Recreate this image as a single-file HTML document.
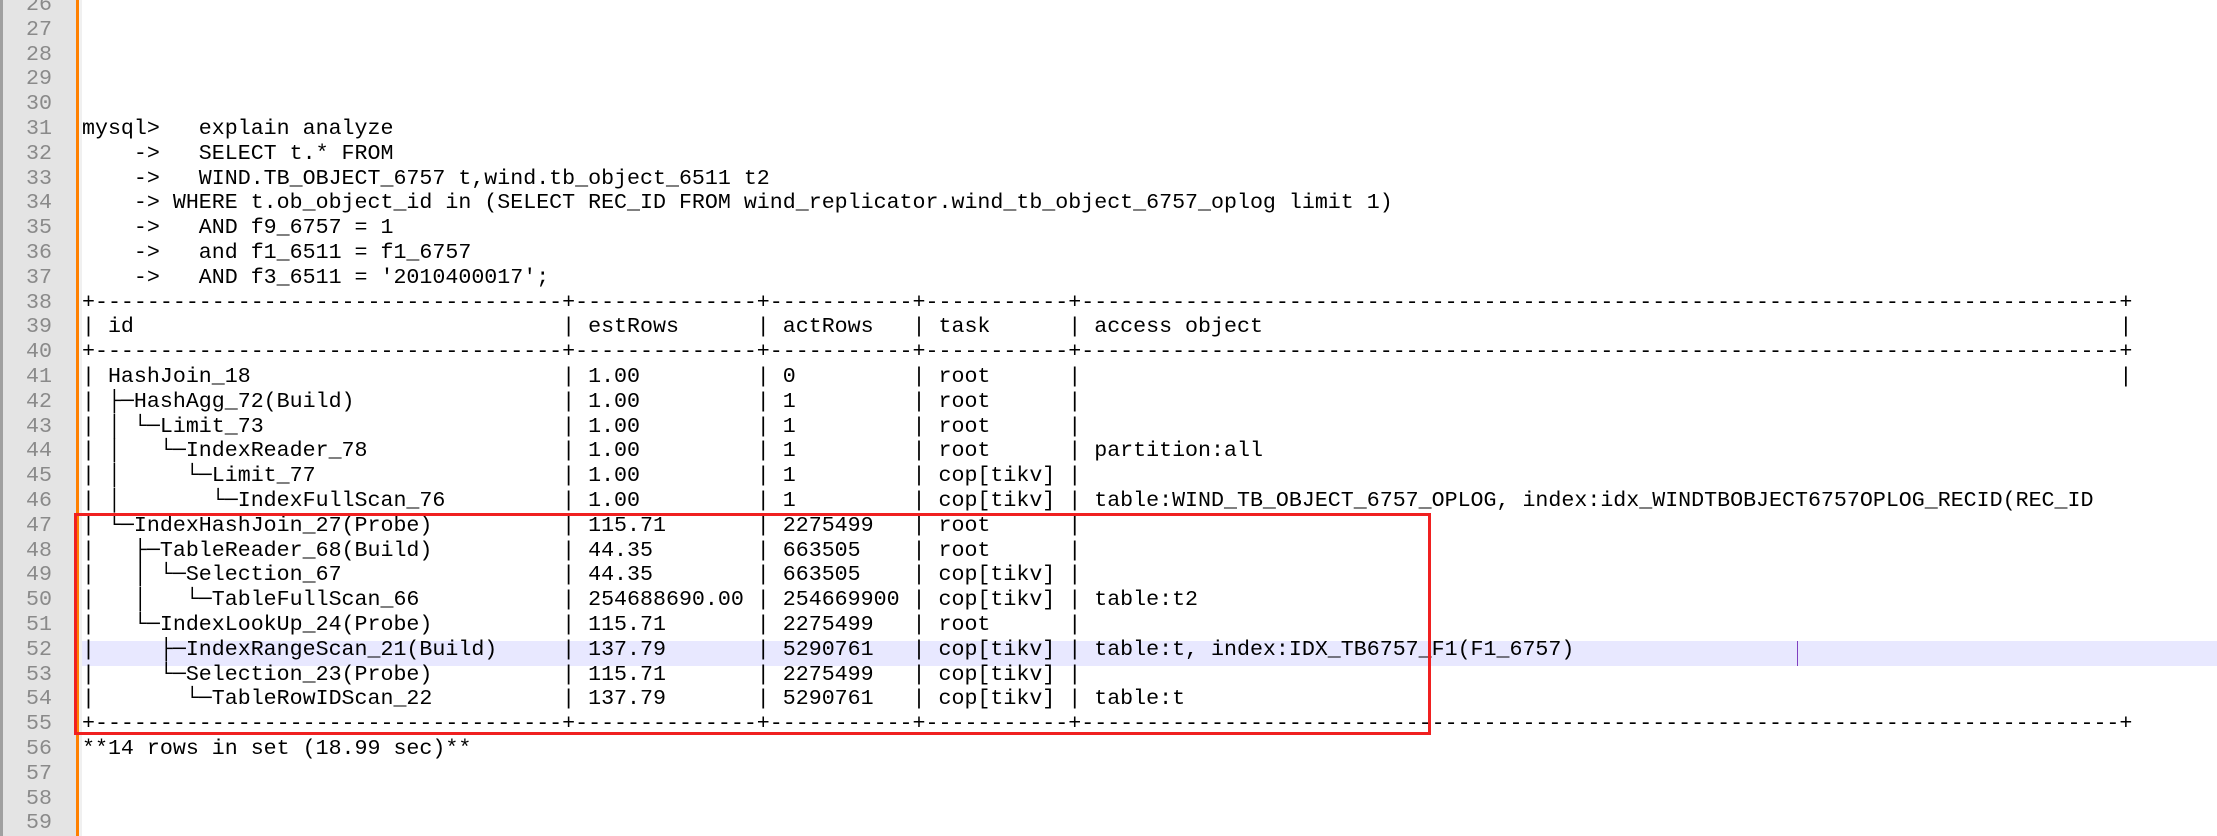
<!DOCTYPE html>
<html><head><meta charset="utf-8"><style>
html,body{margin:0;padding:0;background:#fff;width:2217px;height:836px;overflow:hidden;position:relative}
#gut{position:absolute;left:0;top:0;width:76px;height:836px;background:#e4e4e4;border-left:3px solid #a0a0a0;box-sizing:border-box}
#or{position:absolute;left:76px;top:0;width:3px;height:836px;background:#ff8000}
#st{position:absolute;left:79px;top:0;width:3px;height:836px;background:#f0f0f0}
.hl{position:absolute;left:82px;right:0;height:25px;background:#e8e8ff}
.ln{position:absolute;left:0;width:52px;text-align:right;font-family:"Liberation Mono",monospace;font-size:21.63px;color:#8a8a8a;line-height:24.8px;white-space:pre}
.tx{position:absolute;left:82px;font-family:"Liberation Mono","DejaVu Sans Mono",monospace;font-size:21.63px;color:#000;line-height:24.8px;white-space:pre}
#box{position:absolute;left:74px;top:513px;width:1357px;height:222px;border:3px solid #f02020;box-sizing:border-box}
#cur{position:absolute;left:1797px;top:641px;width:1px;height:25px;background:#8040c0}
</style></head><body>
<div id="gut"></div><div id="or"></div><div id="st"></div>
<div class="hl" style="top:641px"></div>
<div id="cur"></div>
<div class="ln" style="top:-7px">26
27
28
29
30
31
32
33
34
35
36
37
38
39
40
41
42
43
44
45
46
47
48
49
50
51
52
53
54
55
56
57
58
59</div>
<div class="tx" style="top:-7px">




mysql>   explain analyze
    ->   SELECT t.* FROM
    ->   WIND.TB_OBJECT_6757 t,wind.tb_object_6511 t2
    -> WHERE t.ob_object_id in (SELECT REC_ID FROM wind_replicator.wind_tb_object_6757_oplog limit 1)
    ->   AND f9_6757 = 1
    ->   and f1_6511 = f1_6757
    ->   AND f3_6511 = '2010400017';
+------------------------------------+--------------+-----------+-----------+--------------------------------------------------------------------------------+
| id                                 | estRows      | actRows   | task      | access object                                                                  |
+------------------------------------+--------------+-----------+-----------+--------------------------------------------------------------------------------+
| HashJoin_18                        | 1.00         | 0         | root      |                                                                                |
| ├─HashAgg_72(Build)                | 1.00         | 1         | root      |
| │ └─Limit_73                       | 1.00         | 1         | root      |
| │   └─IndexReader_78               | 1.00         | 1         | root      | partition:all
| │     └─Limit_77                   | 1.00         | 1         | cop[tikv] |
| │       └─IndexFullScan_76         | 1.00         | 1         | cop[tikv] | table:WIND_TB_OBJECT_6757_OPLOG, index:idx_WINDTBOBJECT6757OPLOG_RECID(REC_ID
| └─IndexHashJoin_27(Probe)          | 115.71       | 2275499   | root      |
|   ├─TableReader_68(Build)          | 44.35        | 663505    | root      |
|   │ └─Selection_67                 | 44.35        | 663505    | cop[tikv] |
|   │   └─TableFullScan_66           | 254688690.00 | 254669900 | cop[tikv] | table:t2
|   └─IndexLookUp_24(Probe)          | 115.71       | 2275499   | root      |
|     ├─IndexRangeScan_21(Build)     | 137.79       | 5290761   | cop[tikv] | table:t, index:IDX_TB6757_F1(F1_6757)
|     └─Selection_23(Probe)          | 115.71       | 2275499   | cop[tikv] |
|       └─TableRowIDScan_22          | 137.79       | 5290761   | cop[tikv] | table:t
+------------------------------------+--------------+-----------+-----------+--------------------------------------------------------------------------------+
**14 rows in set (18.99 sec)**</div>
<div id="box"></div>
</body></html>
